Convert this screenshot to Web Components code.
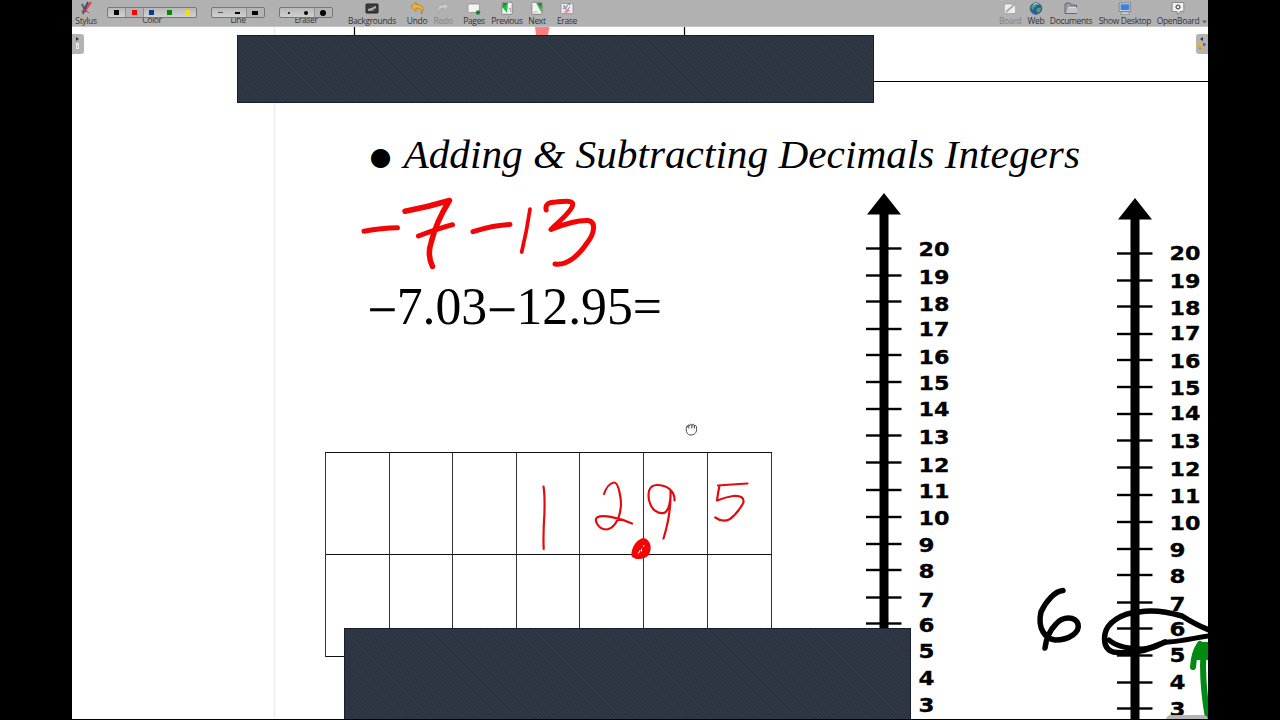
<!DOCTYPE html>
<html lang="en">
<head>
<meta charset="UTF-8">
<title>OpenBoard</title>
<style>
  body {
    margin: 0;
    width: 1280px;
    height: 720px;
    overflow: hidden;
    background: #000;
    display: flex;
    justify-content: center;
    align-items: flex-start;
  }
</style>
</head>
<body>
<open-board></open-board>

<script>
const icons = {
  stylus: `<path d="M3 3l4 8" stroke="#4a5a8c" stroke-width="2"/><path d="M12 1L6 10" stroke="#d8403c" stroke-width="2"/><path d="M9 1L5 9l-1 4" stroke="#3b4a78" stroke-width="1.8"/><path d="M2 11q2-3 4-2t4 3" stroke="#b0524e" stroke-width="1"/>`,
  backgrounds: `<rect x="1" y="3" width="12" height="9" rx=".5" fill="#3c3c3c" stroke="#222"/><path d="M3 10V8l4-1 4-2v2L7 10z" fill="#999"/><path d="M3 9l8-3.500" stroke="#ccc" stroke-width=".7"/>`,
  undo: `<path d="M1 5.500L6 1v2.500c6-.2 9 3.500 5.500 9.500.2-4.500-1-6-5.500-5.700v3z" fill="#eeb02e" stroke="#b57a12" stroke-width=".7"/>`,
  redo: `<path d="M12.500 5.500L8 1.500v2.300c-5.500-.2-7.500 3-5 8.700.3-4 1.500-5.500 5-5.400v2.700z" fill="#c9c9c9" stroke="#a0a0a0" stroke-width=".6"/>`,
  pages: `<rect x="1" y="3" width="11.500" height="8.500" rx=".8" fill="#f4f4f4" stroke="#888" stroke-width=".7"/><circle cx="11" cy="11.500" r="2.300" fill="#22963a"/><path d="M9.800 11.500h2.400M11 10.300v2.400" stroke="#0b6420" stroke-width=".8"/>`,
  previous: `<rect x="1.800" y="1.300" width="10.400" height="12" rx="1" fill="#f2f2f2" stroke="#777" stroke-width=".8"/><path d="M8 2L2.500 6.500 7 12z" fill="#21c04c"/><path d="M2.500 2H8L2.500 7z" fill="#158a35"/><path d="M8.500 8l2-1v4" stroke="#999" stroke-width=".8"/>`,
  next: `<rect x="1.800" y="1.300" width="10.400" height="12" rx="1" fill="#f2f2f2" stroke="#777" stroke-width=".8"/><path d="M6 2l5.800 4.500V12z" fill="#21c04c"/><path d="M6.500 2h5.300v5z" fill="#158a35"/><path d="M3.500 11h4" stroke="#aaa" stroke-width=".8"/>`,
  erase: `<rect x="1" y="2.500" width="12" height="10" rx="1" fill="#ececf2" stroke="#888" stroke-width=".7"/><path d="M3 6q2-3 2 0t2-1 3-.5M3 8q2-2 3 0t4-2" stroke="#55609a" stroke-width=".8"/><path d="M3.500 11l4-3 3 1.500-4 2.500z" fill="#e98b90"/>`,
  board: `<rect x="1.200" y="3" width="11.500" height="9.500" fill="#eee" stroke="#999" stroke-width=".7"/><path d="M3 11L12 3" stroke="#aaa" stroke-width="1.800"/>`,
  web: `<circle cx="7" cy="7.500" r="5.800" fill="#2360ac" stroke="#24406a" stroke-width=".6"/><path d="M3 4.500q3-3 5-2l-1 3-2 1-1 3-2-3zM8 7.500l4-1q0 4-3 5.500L7.500 9.500z" fill="#57a557"/><path d="M4 3.300q3-1.600 6 0" stroke="#bad6ee" stroke-width="1"/>`,
  documents: `<path d="M1 12.500V3l1-1h4l1.500 2H12.500v8.500z" fill="#9899a4" stroke="#555762" stroke-width=".8"/><path d="M2 12L4 6.500h9V12z" fill="#c2c2ca"/><path d="M4 6.500h8" stroke="#eee" stroke-width=".7"/>`,
  desktop: `<rect x="1.200" y="2" width="11.500" height="8.500" fill="#e4e4e4" stroke="#777" stroke-width=".8"/><rect x="2.500" y="3.200" width="9" height="6" fill="#3e83da"/><path d="M4.500 11h5l2.500 2.300H2z" fill="#dadada" stroke="#777" stroke-width=".6"/>`,
  openboard: `<path d="M1.200 1.500h11.600v9H9l-2 2.800-1-2.800H1.200z" fill="#f4f4f4" stroke="#777" stroke-width=".8"/><circle cx="7" cy="6" r="1.800" fill="none" stroke="#555" stroke-width="1.100"/><path d="M7 2.900v1M7 8.100v1M3.900 6h1M9.100 6h1M4.800 3.800l.7.700M8.500 7.500l.7.700M9.200 3.800l-.7.700M5.500 7.500l-.7.700" stroke="#555" stroke-width=".8"/>`
};

// Icon over caption
class ToolButton extends HTMLElement {
  constructor() {
    super();
    this.attachShadow({ mode: "open" });
  }

  connectedCallback() {
    this.shadowRoot.innerHTML = `
    <style>
      :host {
        display: flex;
        flex-direction: column;
        align-items: center;
        flex: none;
        color: #333;
      }
      :host([disabled]) {
        color: #858585;
      }
      svg {
        width: 14px;
        height: 14px;
        margin-top: 1px;
        flex: none;
      }
      .caption {
        white-space: nowrap;
        line-height: 12px;
      }
    </style>
    <svg viewBox="0 0 14 14" fill="none">${icons[this.getAttribute("icon")]}</svg>
    <span class="caption"><slot></slot></span>
    `;
  }
}

// Row of choices drawn over the top of its caption
class ToolPalette extends HTMLElement {
  constructor() {
    super();
    this.attachShadow({ mode: "open" });
  }

  connectedCallback() {
    const active = parseInt(this.getAttribute("active"));
    const cells = this.getAttribute("marks").split(" ").map((mark, i) => {
      const [w, h, color, radius] = mark.split(",");
      return `<div class="cell ${i === active ? "active" : ""}"><i style="width:${w}px;height:${h}px;background:${color};border-radius:${radius || 0}px"></i></div>`;
    });

    this.shadowRoot.innerHTML = `
    <style>
      :host {
        display: flex;
        flex-direction: column;
        align-items: center;
        flex: none;
        color: #333;
      }
      .cells {
        display: flex;
        box-sizing: border-box;
        width: 100%;
        height: 12px;
        margin-top: 7px;
        border: 1px solid #777;
        border-radius: 2px;
        background: linear-gradient(#b8b8b8, #d0d0d0);
        z-index: 1;
        overflow: hidden;
      }
      .cell {
        flex: 1;
        display: flex;
        align-items: center;
        justify-content: center;
      }
      .active {
        background: #b4b4b4;
        box-shadow: 0 0 0 1px #929292;
      }
      .caption {
        line-height: 12px;
        margin-top: -4px;
      }
    </style>
    <div class="cells">${cells.join("")}</div>
    <span class="caption"><slot></slot></span>
    `;
  }
}

class BoardToolbar extends HTMLElement {
  constructor() {
    super();
    this.attachShadow({ mode: "open" });
  }

  connectedCallback() {
    this.shadowRoot.innerHTML = `
    <style>
      :host {
        display: flex;
        height: 27px;
        flex: none;
        background: #b1b1b1;
        border-bottom: 1px solid #c4c4c4;
        box-sizing: border-box;
        font: 8.500px "Open Sans", "Noto Sans", sans-serif;
        letter-spacing: -.35px;
      }
      .spring {
        flex: 1;
      }
      .arrow {
        width: 6px;
        margin: 20px 0 0 3px;
      }
      .arrow svg {
        display: block;
      }
    </style>
    <tool-button icon="stylus" style="width:28px">Stylus</tool-button>
    <tool-palette style="width:90px;margin-left:7px" active="1"
      marks="5,5,#000 5,5,#f00 5,5,#003f8f 5,5,#008a00 5,5,#f0e000">Color</tool-palette>
    <tool-palette style="width:54px;margin-left:14px" active="2"
      marks="5,1,#555 5,2,#000 6,4,#000">Line</tool-palette>
    <tool-palette style="width:54px;margin-left:14px" active="2"
      marks="2,2,#000,1 4,4,#000,2 6,6,#000,3">Eraser</tool-palette>
    <tool-button icon="backgrounds" style="width:50px;margin-left:14px">Backgrounds</tool-button>
    <tool-button icon="undo" style="width:24px;margin-left:8px">Undo</tool-button>
    <tool-button icon="redo" style="width:24px;margin-left:2px" disabled>Redo</tool-button>
    <tool-button icon="pages" style="width:28px;margin-left:5px">Pages</tool-button>
    <tool-button icon="previous" style="width:34px;margin-left:2px">Previous</tool-button>
    <tool-button icon="next" style="width:20px;margin-left:3px">Next</tool-button>
    <tool-button icon="erase" style="width:22px;margin-left:9px">Erase</tool-button>
    <div class="spring"></div>
    <tool-button icon="board" style="width:22px" disabled>Board</tool-button>
    <tool-button icon="web" style="width:18px;margin-left:6px">Web</tool-button>
    <tool-button icon="documents" style="width:42px;margin-left:5px">Documents</tool-button>
    <tool-button icon="desktop" style="width:54px;margin-left:6px">Show Desktop</tool-button>
    <tool-button icon="openboard" style="width:42px;margin-left:5px">OpenBoard</tool-button>
    <div class="arrow"><svg width="5" height="4"><path d="M0 .5h5L2.500 3.500z" fill="#666"/></svg></div>
    `;
  }
}

// Vertical number line, 20 at the top
class NumberLine extends HTMLElement {
  constructor() {
    super();
    this.attachShadow({ mode: "open" });
  }

  connectedCallback() {
    const shift = parseFloat(this.getAttribute("label-shift")) || 0;
    // tick and label centre, measured from the arrow tip
    const rows = [
      [20, 55.500, 56], [19, 82.500, 84.300], [18, 108.500, 111], [17, 136, 136.300],
      [16, 162, 163.800], [15, 189, 190.500], [14, 216, 215.800], [13, 242.500, 244.300],
      [12, 269.500, 272], [11, 297, 298.500], [10, 324, 325.500], [9, 351, 352.500],
      [8, 377, 378.500], [7, 404.500, 407], [6, 430.500, 432], [5, 457.500, 458.300],
      [4, 484.500, 485], [3, 510.500, 511.800]
    ];
    const marks = rows.map(([n, tick, label]) => `
      <rect x="0" y="${tick - 1.200}" width="35.500" height="2.400"/>
      <text x="52.500" y="${label + 6.900 + shift}" textLength="${n > 9 ? 31 : 16}" lengthAdjust="spacingAndGlyphs">${n}</text>`);

    this.shadowRoot.innerHTML = `
    <style>
      :host {
        display: block;
        width: 90px;
        height: 530px;
      }
      svg {
        display: block;
      }
      text {
        font: bold 19px "DejaVu Sans", sans-serif;
        stroke: #000;
        stroke-width: .3px;
      }
    </style>
    <svg width="90" height="530">
      <path d="M18 0L35 21.500H22.500V530h-9V21.500H1z"/>
      ${marks.join("")}
    </svg>
    `;
  }
}

class DigitGrid extends HTMLElement {
  constructor() {
    super();
    this.attachShadow({ mode: "open" });
  }

  connectedCallback() {
    this.shadowRoot.innerHTML = `
    <style>
      :host {
        display: grid;
        grid-template-columns: 64px 63px 64px 63px 64px 64px 64px;
        grid-template-rows: 102px 102px;
        border-left: 1px solid #333;
        border-top: 1px solid #111;
      }
      div {
        border-right: 1px solid #333;
        border-bottom: 1px solid #111;
      }
    </style>
    ${"<div></div>".repeat(14)}
    `;
  }
}

class CoverBlock extends HTMLElement {
  constructor() {
    super();
    this.attachShadow({ mode: "open" });
    this.shadowRoot.innerHTML = `
    <style>
      :host {
        display: block;
        box-sizing: border-box;
        border: 1px solid #17202a;
        background: repeating-linear-gradient(45deg, #2b3440 0 1.500px, #2f3946 1.500px 3px);
      }
    </style>
    `;
  }
}

class SideTab extends HTMLElement {
  constructor() {
    super();
    this.attachShadow({ mode: "open" });
  }

  connectedCallback() {
    const right = this.getAttribute("side") === "right";
    const glyph = right
      ? `<path d="M7 3v4L4 5z" fill="#333"/><path d="M2 10h3v3H2zM6 13h2v2H6z" fill="#d9b23c"/><path d="M7 9h2.500v3H7z" fill="#3e76ad"/><path d="M3 13.500h2v1.500H3z" fill="#a8844a"/>`
      : `<path d="M4 3v4l3-2z" fill="#333"/><path d="M4 9h3v6H4z" fill="#e9e9e9"/><path d="M5.500 11v3" stroke="#bbb"/>`;
    this.shadowRoot.innerHTML = `
    <style>
      :host {
        display: block;
        width: 12px;
        height: 20px;
        background: #b3b3b3;
        border-radius: ${right ? "3px 0 0 3px" : "0 3px 3px 0"};
      }
    </style>
    <svg width="12" height="20">${glyph}</svg>
    `;
  }
}

// Everything on the page sits at its own place on a free canvas
class BoardCanvas extends HTMLElement {
  constructor() {
    super();
    this.attachShadow({ mode: "open" });
  }

  connectedCallback() {
    this.shadowRoot.innerHTML = `
    <style>
      :host {
        display: block;
        position: relative;
        flex: 1;
        overflow: hidden;
        background: #fff;
      }
      .item, svg.layer {
        position: absolute;
      }
      svg.layer {
        left: 0;
        top: 0;
      }
      .title, .sum {
        font-family: "Liberation Serif", serif;
      }
      .title {
        font-size: 41px;
        font-style: italic;
      }
      .sum {
        font-size: 51.800px;
      }
      .minus {
        stroke: #000;
        stroke-width: .6px;
      }
      .bullet {
        font: 25px "DejaVu Sans", sans-serif;
      }
      .ink {
        fill: none;
        stroke-linecap: round;
        stroke-linejoin: round;
      }
    </style>
    <svg class="layer" width="1136" height="692" viewBox="72 27 1136 692">
      <path d="M274.500 27v692" stroke="#ececec" stroke-width="1.500"/>
      <path d="M354.500 27v9M684.500 27v9M874 81.500h334" stroke="#000" stroke-width="1.200"/>
      <path d="M535 27h14.500l-1.500 8h-12z" fill="#ff7f7f"/>
      <text class="bullet" x="369.700" y="164.500">●</text>
      <text class="title" x="403.500" y="168.300" textLength="676.500" lengthAdjust="spacingAndGlyphs">Adding &amp; Subtracting Decimals Integers</text>
      <text class="sum" x="367.500" y="323.800" textLength="294.500" lengthAdjust="spacingAndGlyphs"><tspan class="minus" dy="3.500">−</tspan><tspan dy="-3.500">7.03</tspan><tspan class="minus" dy="3.500">−</tspan><tspan dy="-3.500">12.95=</tspan></text>
    </svg>
    <digit-grid class="item" style="left:253px;top:425px"></digit-grid>
    <number-line class="item" style="left:794px;top:165.500px"></number-line>
    <number-line class="item" label-shift="-.8" style="left:1044.500px;top:170.500px"></number-line>
    <svg class="layer" width="1136" height="692" viewBox="72 27 1136 692">
      <g class="ink" stroke="#f20505" stroke-width="5">
        <path d="M364 231.200Q382 228 397.500 227.700"/>
        <path d="M405 211.200Q428 207 449.500 200.500Q436 222 431 243Q427 255 432.500 266.500" stroke-width="5.500"/>
        <path d="M418.500 236Q437 229 452.500 224.700"/>
        <path d="M473 231.700Q494 225 510 224.500"/>
        <path d="M530 209Q527 230 521.700 252" stroke-width="3.700"/>
        <path d="M546.200 210C545 205 548 202 556 202C568 201 575 200 572 207C568 215 557 223 551 229.500C563 224 580 220 588 220.500C597 222 594 234 587 243C579 255 567 266 555 264"/>
      </g>
      <g class="ink" stroke="#e20c10" stroke-width="2.200">
        <path d="M543.500 486.500Q545 495 544.400 514Q543 535 543.700 549"/>
        <path d="M604 494C606 488 610 483 614 482.500C619 482 622 502 620.500 509C619 521 613 529 606 529.500C598 529 594 520 597 517.500C603 514 619 518 632 523.500"/>
        <path d="M674.500 500.500C675 490 666 485 657 485C648 485 648 494 649 500C651 510 658 514 664 513C669 511 671 500 670.500 491.500C671 508 668 524 663.500 538.500"/>
        <path d="M718 485.500Q731 484.500 747.500 483.500M719.500 485.500Q718 493 717 500.500Q726 497 733 496Q745 495 743.300 503Q737 514 730 519Q723 523 715.300 517.500"/>
      </g>
      <path d="M631.500 556C630.500 548 637 538.500 644 538C651 540 652.500 549 648.500 555C645 560 634 560.500 631.500 556z" fill="#f20505"/>
      <path d="M638.300 553.500l2-3.500M641.500 551.500v-3M643.500 547l.5-2" stroke="#fff" stroke-width="1"/>
      <g class="ink" stroke="#000" stroke-width="5">
        <path d="M1063 590.500C1055 591 1046 601 1041 612C1037 629 1046 639 1055 640C1070 640 1080 632 1078 624C1075 616 1063 616 1056 624C1050 630 1046 640 1045 648" stroke-width="5.500"/>
        <path d="M1109 640C1117 647 1127 648 1141 649C1151 649 1158 643 1168 642C1184 641 1198 637 1212 635.500"/>
        <path d="M1212 631C1200 627 1190 621 1182 616C1165 611 1150 610 1139 612C1121 613 1107 623 1105 634C1103 646 1108 652 1117 652.500C1136 654 1150 650 1165 642" stroke-width="5.500"/>
      </g>
      <path class="ink" d="M1193 667Q1194 652 1200 644Q1204 652 1203 665Q1203 690 1208 718" stroke="#008a12" stroke-width="6"/>
      <path d="M1194 650l4-8h10v18h-12z" fill="#008a12"/>
      <path d="M1166 719q1-4 5-4h32q4 0 5 4z" fill="#b5b5b5"/>
      <path d="M686.500 426.500c-1 5 .5 8.500 4.500 8.500 4.500 0 6.500-4 5.300-8.500-.5-1.500-1.800-1.500-2 0 0-2.800-2-3-2.300-.7-.2-2.200-2.200-2.200-2.400.2-.5-1.800-2.300-1.200-2 1z" fill="#fff" stroke="#333" stroke-width=".9"/>
      <path d="M688.800 425.500v3M691.800 425.500v3M694.300 426v2.500" stroke="#333" stroke-width=".9"/>
    </svg>
    <cover-block class="item" style="left:165px;top:8px;width:637px;height:68px"></cover-block>
    <cover-block class="item" style="left:272px;top:601px;width:567px;height:93px"></cover-block>
    <side-tab class="item" style="left:0;top:7px"></side-tab>
    <side-tab class="item" side="right" style="right:0;top:7px"></side-tab>
    `;
  }
}

class OpenBoard extends HTMLElement {
  constructor() {
    super();
    this.attachShadow({ mode: "open" });
    this.shadowRoot.innerHTML = `
    <style>
      :host {
        display: flex;
        flex-direction: column;
        width: 1136px;
        height: 719px;
      }
    </style>
    <board-toolbar></board-toolbar>
    <board-canvas></board-canvas>
    `;
  }
}

customElements.define("tool-button", ToolButton);
customElements.define("tool-palette", ToolPalette);
customElements.define("board-toolbar", BoardToolbar);
customElements.define("number-line", NumberLine);
customElements.define("digit-grid", DigitGrid);
customElements.define("cover-block", CoverBlock);
customElements.define("side-tab", SideTab);
customElements.define("board-canvas", BoardCanvas);
customElements.define("open-board", OpenBoard);
</script>
</body>
</html>
